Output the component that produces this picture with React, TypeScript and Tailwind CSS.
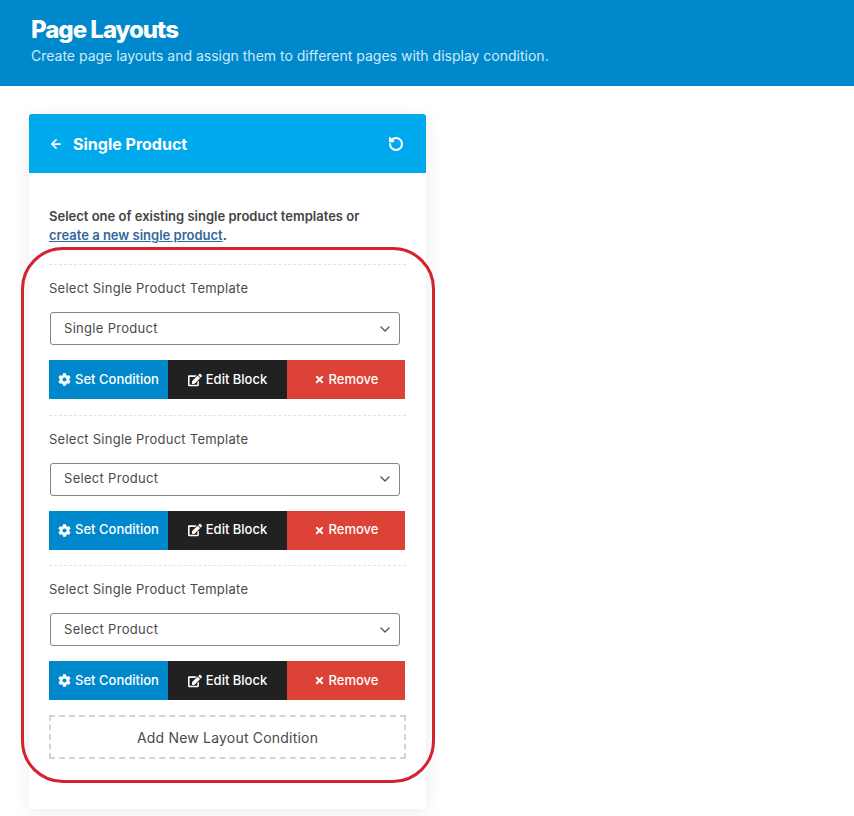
import { ArrowLeft, ChevronDown, RotateCcw } from "lucide-react";
import { FaCog, FaEdit, FaTimes } from "react-icons/fa";

interface BlockProps {
  value: string;
}

const Block = ({ value }: BlockProps) => {
  return (
    <div className="h-[150.5px] border-t border-dashed border-[#e2e2e2] pt-[14px]">
      <p className="text-[13px] leading-[18px] tracking-[0.25px] text-[#4a4a4a]">Select Single Product Template</p>
      <div className="mt-[15px] ml-px flex h-[33px] w-[350px] items-center justify-between rounded-[3px] border border-[#858585] pl-[13px] pr-[6px] text-[13px] tracking-[0.3px] text-[#4a4a4a]">
        <span>{value}</span>
        <ChevronDown size={16} strokeWidth={2} className="text-[#555]" />
      </div>
      <div className="mt-[15px] grid h-[39px] w-[356px] grid-cols-[119px_119px_118px] text-[13px] font-medium text-white">
        <div className="flex items-center justify-center gap-1 bg-[#0088cc]">
          <FaCog size={13} />
          <span>Set Condition</span>
        </div>
        <div className="flex items-center justify-center gap-1 bg-[#212121]">
          <FaEdit size={14} />
          <span>Edit Block</span>
        </div>
        <div className="flex items-center justify-center gap-1 bg-[#dc4236]">
          <FaTimes size={11} />
          <span>Remove</span>
        </div>
      </div>
    </div>
  );
};

const App = () => {
  return (
    <div className="relative h-[816px] w-[854px] overflow-hidden bg-white font-['Inter',sans-serif]">
      <header className="h-[86px] bg-[#0088cc] pl-[31px] pt-[15px]">
        <h1 className="text-[24px] leading-[30px] font-extrabold tracking-[-1px] text-white">Page Layouts</h1>
        <p className="mt-[1px] text-[14px] leading-[20px] text-[#cfeaf7]">
          Create page layouts and assign them to different pages with display condition.
        </p>
      </header>
      <div className="ml-[29px] mt-[28px] h-[695px] w-[397px] rounded-[3px] bg-white shadow-[0_4px_20px_rgba(0,0,0,0.08)]">
        <div className="flex h-[59px] items-center justify-between rounded-t-[3px] bg-[#00a9ec] pl-[20px] pr-[22px] text-white">
          <div className="flex items-center gap-[10px]">
            <ArrowLeft size={14} strokeWidth={3} />
            <span className="text-[16px] font-bold">Single Product</span>
          </div>
          <RotateCcw size={16} strokeWidth={3} />
        </div>
        <div className="px-[20px] pt-[34px]">
          <p className="text-[13px] leading-[19px] font-semibold text-[#444]">
            Select one of existing single product templates or
            <br />
            <a className="text-[#33689c] underline">create a new single product</a>.
          </p>
          <div className="mt-[19px]">
            <Block value="Single Product" />
            <Block value="Select Product" />
            <Block value="Select Product" />
          </div>
          <div className="-mt-[0.5px] flex h-[44px] w-[357px] items-center justify-center border-2 border-dashed border-[#d4d4d4] text-[14px] tracking-[0.2px] text-[#4a4a4a]">
            Add New Layout Condition
          </div>
        </div>
      </div>
      <div className="pointer-events-none absolute left-[21px] top-[247px] h-[536px] w-[414px] rounded-[42px] border-[3px] border-[#d2232e]" />
    </div>
  );
};

export default App;
